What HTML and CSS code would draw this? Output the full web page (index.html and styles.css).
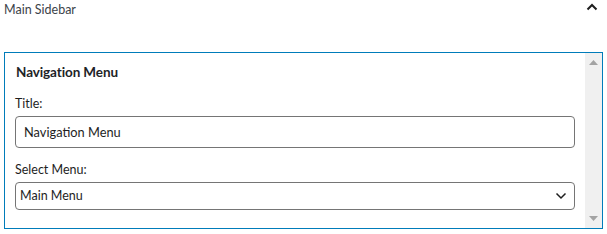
FILE: index.html
```html
<!DOCTYPE html>
<html>
<head>
<meta charset="utf-8">
<link rel="stylesheet" href="styles.css">
</head>
<body>
<div class="sidebar-header">
  <span class="sidebar-title">Main Sidebar</span>
  <svg class="caret-up" width="12" height="8" viewBox="0 0 12 8"><path d="M1.5 6.5 L6 2 L10.5 6.5" fill="none" stroke="#1e1e1e" stroke-width="2"/></svg>
</div>
<div class="widget">
  <div class="widget-body">
    <h3 class="widget-title">Navigation Menu</h3>
    <label class="field-label">Title:</label>
    <div class="text-input">Navigation Menu</div>
    <label class="field-label second">Select Menu:</label>
    <div class="select-input">
      <span>Main Menu</span>
      <svg class="chevron" width="12" height="8" viewBox="0 0 12 8"><path d="M1.5 1.5 L6 6 L10.5 1.5" fill="none" stroke="#1e1e1e" stroke-width="1.5"/></svg>
    </div>
  </div>
  <div class="scrollbar">
    <svg class="arrow" width="9" height="5" viewBox="0 0 9 5"><path d="M0 5 L4.5 0 L9 5 Z" fill="#a3a3a3"/></svg>
    <svg class="arrow" width="9" height="5" viewBox="0 0 9 5"><path d="M0 0 L4.5 5 L9 0 Z" fill="#a3a3a3"/></svg>
  </div>
</div>
</body>
</html>
```
FILE: styles.css
```css
html, body {
  margin: 0;
  padding: 0;
  background: #ffffff;
}
body {
  font-family: "Lato", "Noto Sans", sans-serif;
  color: #1e1e1e;
  width: 607px;
  height: 234px;
  overflow: hidden;
}
.sidebar-header {
  display: flex;
  justify-content: space-between;
  align-items: flex-start;
  height: 52px;
  padding: 0 4px 0 4px;
  box-sizing: border-box;
}
.sidebar-title {
  font-size: 12.5px;
  line-height: 20px;
  color: #3c434a;
}
.caret-up {
  margin-top: 3px;
  margin-right: 5px;
}
.widget {
  margin-left: 4px;
  width: 599px;
  height: 177px;
  box-sizing: border-box;
  border: 1px solid #007cba;
  display: flex;
}
.widget-body {
  flex: 1;
  padding: 9px 10px 0 10px;
}
.widget-title {
  margin: 0 0 12px 1px;
  font-size: 13.5px;
  line-height: 20px;
  font-weight: 700;
  color: #1d2327;
  letter-spacing: -0.1px;
}
.field-label {
  display: block;
  font-size: 12.5px;
  line-height: 20px;
  margin-bottom: 2px;
}
.field-label.second {
  margin-top: 12px;
}
.text-input {
  height: 32px;
  box-sizing: border-box;
  border: 1px solid #757575;
  border-radius: 4px;
  padding: 0 8px;
  font-size: 12.8px;
  line-height: 30px;
}
.select-input {
  height: 28px;
  box-sizing: border-box;
  border: 1px solid #757575;
  border-radius: 4px;
  padding: 0 7px 0 4px;
  font-size: 12.5px;
  line-height: 26px;
  display: flex;
  justify-content: space-between;
  align-items: center;
}
.scrollbar {
  width: 17px;
  background: #f0f0f0;
  display: flex;
  flex-direction: column;
  justify-content: space-between;
  align-items: center;
  padding: 7px 0 7px 0;
  box-sizing: border-box;
}
.arrow {
  display: block;
}
```
